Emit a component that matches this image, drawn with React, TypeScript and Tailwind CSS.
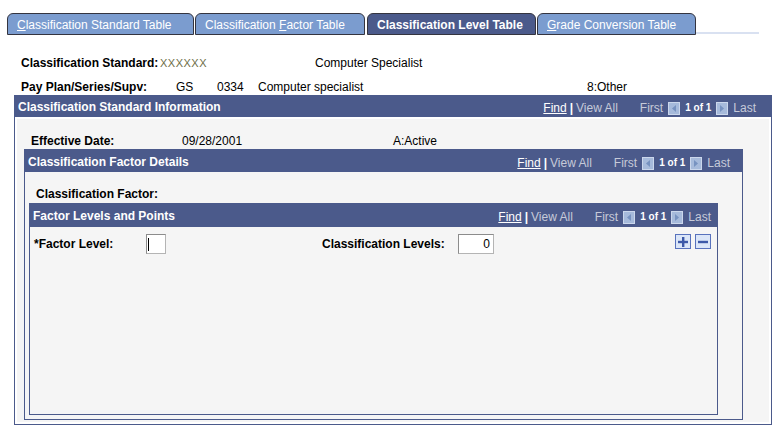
import React from "react";

const Arrow = ({ dir }: { dir: "l" | "r" }) => (
  <svg width="12" height="13" viewBox="0 0 12 13" className="shrink-0">
    <rect x="0" y="0" width="12" height="13" fill="#a6badb" />
    <rect x="0.5" y="0.5" width="11" height="12" fill="none" stroke="#cbd7ec" />
    {dir === "l" ? (
      <polygon points="8,3 8,10 4,6.5" fill="#7792c0" />
    ) : (
      <polygon points="4,3 4,10 8,6.5" fill="#7792c0" />
    )}
  </svg>
);

const Nav = ({ pr }: { pr: string }) => (
  <div className={`flex items-center h-full pt-[3px] text-[12px] ${pr}`}>
    <span className="text-white underline">Find</span>
    <span className="text-white font-bold mx-[3px]">|</span>
    <span className="text-[#c6cad9]">View All</span>
    <span className="text-[#c6cad9] ml-[22px] mr-[5px]">First</span>
    <Arrow dir="l" />
    <span className="text-white font-bold text-[10px] mx-[5px]">1 of 1</span>
    <Arrow dir="r" />
    <span className="text-[#c6cad9] ml-[5px]">Last</span>
  </div>
);

const Tab = ({
  w,
  active,
  children,
  cls = "",
}: {
  w: string;
  active?: boolean;
  children: React.ReactNode;
  cls?: string;
}) => (
  <div
    className={`${w} ${cls} h-[22px] rounded-t-[6px] border border-[#34343f] pl-[9px] pt-[1px] flex items-center text-[12px] text-white ${
      active ? "bg-[#4b5a8b] font-bold" : "bg-[#7b9ccf]"
    }`}
  >
    {children}
  </div>
);

export default function App() {
  return (
    <div className="w-[779px] h-[440px] bg-white overflow-hidden font-['Liberation_Sans',Arial,sans-serif] text-[12px] leading-[16px] text-black">
      {/* Tabs */}
      <div className="flex items-end pt-[13px] pl-[7px]">
        <Tab w="w-[187px]">
          <span>
            <span className="underline">C</span>lassification Standard Table
          </span>
        </Tab>
        <Tab w="w-[170px]" cls="ml-[1px]">
          <span>
            Classification <span className="underline">F</span>actor Table
          </span>
        </Tab>
        <Tab w="w-[169px]" cls="ml-[2px]" active>
          <span>Classification Level Table</span>
        </Tab>
        <Tab w="w-[159px]" cls="ml-[1px]">
          <span>
            <span className="underline">G</span>rade Conversion Table
          </span>
        </Tab>
        <div className="w-[63px] h-[2px] mb-[1px] bg-[#d9e1f1]" />
      </div>

      {/* Top info rows */}
      <div className="flex h-[16px] items-center pl-[21px] mt-[20px]">
        <span className="font-bold w-[139px]">Classification Standard:</span>
        <span className="w-[155px] text-[11px] text-[#6e6e48] tracking-[0.5px]">XXXXXX</span>
        <span>Computer Specialist</span>
      </div>
      <div className="flex h-[16px] items-center pl-[21px] mt-[8px]">
        <span className="font-bold w-[155px]">Pay Plan/Series/Supv:</span>
        <span className="w-[41px]">GS</span>
        <span className="w-[41px]">0334</span>
        <span className="w-[329px]">Computer specialist</span>
        <span>8:Other</span>
      </div>

      {/* Outer box */}
      <div className="ml-[14px] w-[758px] h-[330px] border border-[#4b5a8b] flex flex-col">
        <div className="h-[21px] bg-[#4b5a8b] flex items-center justify-between pl-[3px]">
          <span className="text-white font-bold">Classification Standard Information</span>
          <Nav pr="pr-[15px]" />
        </div>
        <div className="flex-1 p-[2px] bg-white flex flex-col">
          <div className="flex-1 bg-[#f5f5f5] flex flex-col pt-[14px]">
            <div className="flex h-[16px] items-center pl-[14px]">
              <span className="font-bold w-[151px]">Effective Date:</span>
              <span className="w-[211px]">09/28/2001</span>
              <span>A:Active</span>
            </div>

            {/* Middle box */}
            <div className="ml-[7px] w-[719px] h-[271px] border border-[#4b5a8b] flex flex-col">
              <div className="h-[22px] bg-[#4b5a8b] flex items-center justify-between pl-[3px] pt-[1px]">
                <span className="text-white font-bold">Classification Factor Details</span>
                <Nav pr="pr-[12px]" />
              </div>
              <div className="flex-1 bg-[#f5f5f5] flex flex-col">
                <div className="flex h-[16px] items-center pl-[11px] mt-[14px]">
                  <span className="font-bold">Classification Factor:</span>
                </div>

                {/* Inner box */}
                <div className="ml-[4px] mt-[1px] w-[689px] h-[212px] border border-[#4b5a8b] flex flex-col">
                  <div className="h-[23px] bg-[#4b5a8b] flex items-center justify-between pl-[3px]">
                    <span className="text-white font-bold">Factor Levels and Points</span>
                    <Nav pr="pr-[6px]" />
                  </div>
                  <div className="flex-1 bg-[#f5f5f5]">
                    <div className="flex items-center pl-[4px] mt-[7px] h-[20px]">
                      <span className="font-bold w-[112px]">*Factor Level:</span>
                      <div className="w-[20px] h-[20px] bg-white border border-[#b4b4b4] border-t-[#8c8c8c] border-l-[#8c8c8c] flex items-center pl-[1px]">
                        <div className="w-[1px] h-[13px] bg-black" />
                      </div>
                      <span className="font-bold w-[136px] ml-[156px]">Classification Levels:</span>
                      <div className="w-[36px] h-[20px] bg-white border border-[#b4b4b4] border-t-[#8c8c8c] border-l-[#8c8c8c] flex items-center justify-end pr-[3px]">
                        <span>0</span>
                      </div>
                      <div className="ml-[181px] flex items-center gap-[4px] self-start">
                        <div className="w-[16px] h-[15px] bg-[#dbe6f8] border border-[#5872bd] flex items-center justify-center">
                          <svg width="10" height="10" viewBox="0 0 10 10">
                            <rect x="4" y="0" width="2.4" height="10" fill="#3d59a8" />
                            <rect x="0" y="3.8" width="10" height="2.4" fill="#3d59a8" />
                          </svg>
                        </div>
                        <div className="w-[16px] h-[15px] bg-[#dbe6f8] border border-[#5872bd] flex items-center justify-center">
                          <svg width="10" height="10" viewBox="0 0 10 10">
                            <rect x="0" y="3.8" width="10" height="2.4" fill="#3d59a8" />
                          </svg>
                        </div>
                      </div>
                    </div>
                  </div>
                </div>
              </div>
            </div>
          </div>
        </div>
      </div>
    </div>
  );
}
